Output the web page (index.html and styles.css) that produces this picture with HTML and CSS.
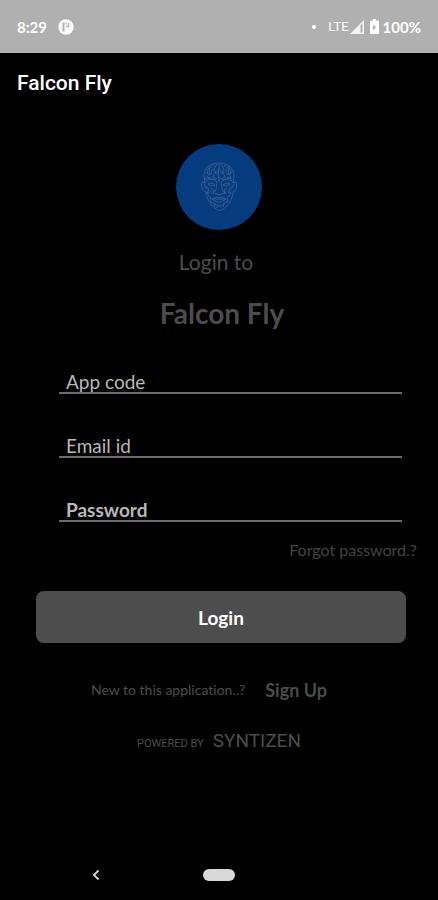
FILE: index.html
```html
<!DOCTYPE html>
<html lang="en">
  <head>
    <meta charset="utf-8">
    <meta name="viewport" content="width=device-width, initial-scale=1">
    <title>Falcon Fly</title>
    <link rel="stylesheet" href="styles.css">
  </head>
  <body>
    <div class="status">
      <span class="clock">8:29</span>
      <svg class="app-icon" width="16" height="16" viewBox="0 0 16 16">
        <circle cx="8" cy="8" r="7.7" fill="#fff"/>
        <path d="M5.500 3.500v9" fill="none" stroke="#b0b0b0" stroke-width="2"/>
        <path d="M8 3.500v2M8 7.500h2.500V4" fill="none" stroke="#b0b0b0" stroke-width="1.300"/>
      </svg>
      <span class="dot"></span>
      <span class="lte">LTE</span>
      <svg class="signal" width="14" height="14" viewBox="0 0 14 14">
        <path d="M14 0v14H0z" fill="#f4f4f4"/>
        <path d="M10.500 5v7.500h2V3.500z" fill="#b0b0b0"/>
      </svg>
      <svg class="battery" width="9" height="15" viewBox="0 0 9 15">
        <path d="M3 0h3v1.500h2q1 0 1 1V14q0 1-1 1H1q-1 0-1-1V2.500q0-1 1-1h2z" fill="#fff"/>
        <path d="M3 5.500l3 3L3 11.500z" fill="#b0b0b0"/>
      </svg>
      <span class="percent">100%</span>
    </div>

    <header class="appbar">
      <h1>Falcon Fly</h1>
    </header>

    <main>
      <svg class="logo" width="86" height="86" viewBox="0 0 86 86">
        <circle cx="43" cy="43" r="43" fill="#053c80"/>
        <g fill="none" stroke="#6482a0" stroke-width=".7" opacity=".7">
          <path d="M43 19c-9 0-15 5-15 13l1 7-3-1c-1 4 0 9 4 10 1 9 6 14 10 17 2 2 5 2 7 0 5-3 9-8 10-17 4-1 4-6 3-10l-3 1 1-7c0-8-6-13-15-13z"/>
          <path d="M38 21l-5 4 1 4-3 4 4 2M41 20l-3 5 2 3-3 4 3 3M48 21l5 4-1 4 3 4-4 2M45 20l3 5-2 3 3 4-3 3M43 20v6l-1 4 1 5v3M34 22l-3 5 1 3M52 22l3 5-1 3"/>
          <path d="M30 37c4-3 8-2 11 1M56 37c-4-3-8-2-11 1M32 40l4-1 3 2-4 1zM54 40l-4-1-3 2 4 1z"/>
          <path d="M41 38l-1 8-3 3 4 1 2 1 2-1 4-1-3-3-1-8M36 55l5-2 2 1 2-1 5 2-5 3h-4zM37 55h12"/>
          <path d="M29 42l4 3-2 5 4-3M57 42l-4 3 2 5-4-3M32 51l3 3-1 4 4 1 1 4M54 51l-3 3 1 4-4 1-1 4M35 44l3 2-2 4M51 44l-3 2 2 4"/>
          <path d="M30 29l5 2 1-6 4 5 3-6 3 6 4-5 1 6 5-2M29 35l7-2 3 3 4-3 4 3 3-3 7 2M28 40l3 6M58 40l-3 6M38 60l5 2 5-2M40 64l3-3 3 3" stroke-dasharray="2 1"/>
        </g>
      </svg>

      <p class="login-to">Login to</p>
      <h2>Falcon Fly</h2>

      <form>
        <div class="fields">
          <input type="text" name="appcode" placeholder="App code" aria-label="App code">
          <input type="email" name="email" placeholder="Email id" aria-label="Email id">
          <input type="password" name="password" class="password" placeholder="Password" aria-label="Password">
        </div>
        <a class="forgot" href="#">Forgot password.?</a>
        <button type="submit" class="login-button">Login</button>
      </form>

      <p class="signup">
        <span>New to this application..?</span>
        <a href="#">Sign Up</a>
      </p>
      <p class="powered">
        <span>POWERED BY</span>
        <span class="company">SYNTIZEN</span>
      </p>
    </main>

    <nav class="navbar">
      <button type="button" class="back" aria-label="Back">
        <svg width="8" height="12" viewBox="0 0 8 12">
          <path d="M6.500 1.500L2 6l4.500 4.500" fill="none" stroke="#d8d8d8" stroke-width="1.800"/>
        </svg>
      </button>
      <button type="button" class="home" aria-label="Home"></button>
      <span></span>
    </nav>
  </body>
</html>
```
FILE: styles.css
```css
* {
    box-sizing: border-box;
}
body {
    margin: 0;
    min-height: 100vh;
    display: flex;
    flex-direction: column;
    background-color: #000000;
    color: #4c4c4c;
    font-family: Lato, sans-serif;
    font-variant-ligatures: none;
}
h1, h2, p {
    margin: 0;
}
a {
    color: inherit;
    text-decoration: none;
}
button {
    border: 0;
    padding: 0;
    font-family: inherit;
}

/* status bar */
.status {
    display: flex;
    align-items: center;
    height: 53px;
    padding: 0 17px;
    background-color: #b0b0b0;
    color: #ffffff;
    font-size: 15px;
    font-weight: bold;
}
.app-icon {
    margin-left: 11px;
}
.dot {
    width: 4px;
    height: 4px;
    margin-left: auto;
    margin-right: 12px;
    border-radius: 50%;
    background-color: #ffffff;
}
.lte {
    font-family: Roboto, sans-serif;
    font-size: 13px;
    font-weight: normal;
    letter-spacing: normal;
}
.signal {
    margin-left: 1px;
}
.battery {
    margin-left: 6px;
    margin-right: 4px;
}

.appbar {
    display: flex;
    align-items: center;
    height: 60px;
    padding: 0 17px;
}
.appbar h1 {
    color: #ffffff;
    font-family: Roboto, sans-serif;
    font-size: 21px;
    font-weight: 500;
}

/* login form */
main {
    display: flex;
    flex-direction: column;
    align-items: center;
    padding-top: 31px;
}
.login-to {
    margin-top: 19px;
    padding-right: 6px;
    font-size: 21px;
    line-height: 26px;
}
h2 {
    margin-top: 22px;
    padding-left: 6px;
    font-size: 28px;
    line-height: 32px;
}
form {
    display: flex;
    flex-direction: column;
    width: 100%;
    padding: 0 32px 0 36px;
}
.fields {
    display: flex;
    flex-direction: column;
    gap: 32px;
    margin-top: 33px;
    padding: 0 4px 0 23px;
}
.fields input {
    width: 100%;
    height: 32px;
    padding: 8px 7px 0;
    border: 0;
    border-bottom: 2px solid #6c6c6c;
    background-color: transparent;
    color: #b8b8b8;
    font-family: inherit;
    font-size: 19px;
}
.fields input::placeholder {
    color: #b8b8b8;
}
.fields .password {
    font-weight: bold;
}
.forgot {
    align-self: flex-end;
    margin-top: 18px;
    margin-right: -11px;
    color: #444444;
    font-size: 16px;
    line-height: 20px;
}
.login-button {
    height: 52px;
    margin-top: 31px;
    border-radius: 8px;
    background-color: #4d4d4d;
    color: #ffffff;
    font-size: 19px;
    font-weight: bold;
}
.signup {
    display: flex;
    align-items: center;
    gap: 20px;
    margin-top: 37px;
    padding-right: 20px;
    font-size: 14px;
    line-height: 20px;
}
.signup a {
    font-size: 18px;
    font-weight: bold;
}
.powered {
    display: flex;
    align-items: baseline;
    gap: 9px;
    margin-top: 29px;
    font-family: Roboto, sans-serif;
    font-size: 11px;
    line-height: 24px;
}
.company {
    font-size: 19px;
}

/* system navigation */
.navbar {
    display: grid;
    grid-template-columns: 1fr 32px 1fr;
    align-items: center;
    height: 50px;
    margin-top: auto;
}
.back {
    justify-self: center;
    display: flex;
    padding-right: 12px;
    background-color: transparent;
}
.home {
    height: 12px;
    border-radius: 6px;
    background-color: #d8d8d8;
}
```
